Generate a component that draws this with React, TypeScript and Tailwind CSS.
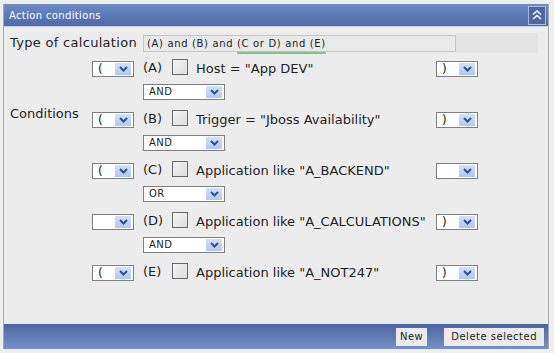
import React from 'react';

const font = { fontFamily: '"DejaVu Sans", Verdana, sans-serif' };

const Chevron: React.FC = () => (
  <svg width="9" height="6" viewBox="0 0 9 6" fill="none">
    <path d="M1 1 L4.5 4.5 L8 1" stroke="#2f4f8f" strokeWidth="2" />
  </svg>
);

const Select: React.FC<{ value: string; wide?: boolean }> = ({ value, wide }) => (
  <div
    className={`flex items-center h-[16px] bg-white border border-[#7f7f7f] ${wide ? 'w-[82px]' : 'w-[42px]'}`}
  >
    <span className={`flex-1 pl-[5px] leading-none text-[#222] ${wide ? 'text-[10px] tracking-[0.5px]' : 'text-[12px]'}`}>{value}</span>
    <span className="flex items-center justify-center w-[16px] h-[12px] mr-[2px] bg-gradient-to-b from-[#d3e0f9] to-[#b3c7ef]">
      <Chevron />
    </span>
  </div>
);

const Checkbox: React.FC = () => (
  <div className="w-[16px] h-[16px] border border-[#6b6b6b] bg-gradient-to-br from-[#f4f4f4] to-[#dcdcdc]" />
);

type Cond = { open: string; tag: string; text: string; close: string; op?: string };

const conditions: Cond[] = [
  { open: '(', tag: '(A)', text: 'Host = "App DEV"', close: ')', op: 'AND' },
  { open: '(', tag: '(B)', text: 'Trigger = "Jboss Availability"', close: ')', op: 'AND' },
  { open: '(', tag: '(C)', text: 'Application like "A_BACKEND"', close: '', op: 'OR' },
  { open: '', tag: '(D)', text: 'Application like "A_CALCULATIONS"', close: ')', op: 'AND' },
  { open: '(', tag: '(E)', text: 'Application like "A_NOT247"', close: ')' },
];

const App: React.FC = () => {
  return (
    <div className="w-[554px] h-[353px] bg-[#eeeeee] pt-[4px] overflow-hidden" style={font}>
      <div className="mx-[3px] w-[546px] border-x border-[#a9a9a9]">
        {/* Header */}
        <div className="flex items-center justify-between h-[23px] pl-[5px] pr-[2px] bg-gradient-to-b from-[#6d8cc4] to-[#4c6aa8] border-b border-[#c9d3e6]">
          <span className="text-[10px] text-white tracking-[0.35px]">Action conditions</span>
          <div className="flex items-center justify-center w-[18px] h-[19px] border border-[#a9bbe0] bg-[#4d68a4]">
            <svg width="12" height="12" viewBox="0 0 12 12" fill="none">
              <path d="M2 5.5 L6 2 L10 5.5" stroke="white" strokeWidth="1.5" />
              <path d="M2 10 L6 6.5 L10 10" stroke="white" strokeWidth="1.5" />
            </svg>
          </div>
        </div>

        {/* Body */}
        <div className="h-[292px] bg-[#ececec] text-[#1e1e1e]">
          <div className="flex items-center h-[22px] mt-[5px] pl-[6px] pr-[10px]">
            <span className="w-[133px] text-[13px] tracking-[0.3px]">Type of calculation</span>
            <div className="flex items-center w-[313px] h-[17px] bg-[#e9e9e9] border border-[#c4c4c4] pl-[3px] text-[10px] tracking-[0.65px] text-[#222] whitespace-nowrap">
              (A) and (B) and&nbsp;
              <span className="underline decoration-[#86c08c] decoration-2 underline-offset-[5px]">(C or D) and (E)</span>
            </div>
            <div className="flex-1 h-[20px] bg-[#e3e3e3]" />
          </div>

          <div className="flex mt-[3px]">
            <div className="w-[88px] pl-[6px] pt-[47px] text-[13px]">Conditions</div>
            <div className="flex flex-col">
              {conditions.map((c) => (
                <div key={c.tag} className="flex flex-col">
                  <div className="flex items-center h-[24px]">
                    <Select value={c.open} />
                    <span className="ml-[9px] w-[29px] text-[13px] -mt-[3px]">{c.tag}</span>
                    <div className="-mt-[4px]">
                      <Checkbox />
                    </div>
                    <span className="ml-[8px] w-[240px] text-[13px] whitespace-nowrap">{c.text}</span>
                    <Select value={c.close} />
                  </div>
                  {c.op && (
                    <div className="h-[27px] pt-[3px] pl-[51px]">
                      <Select value={c.op} wide />
                    </div>
                  )}
                </div>
              ))}
            </div>
          </div>
        </div>

        {/* Footer */}
        <div className="flex items-center justify-end gap-[17px] h-[25px] pr-[4px] bg-gradient-to-b from-[#4a66a3] to-[#7791c6]">
          <button className="h-[18px] px-[4px] bg-[#ebebeb] text-[10px] text-[#222] tracking-[0.5px]">New</button>
          <button className="h-[18px] px-[7px] bg-[#ebebeb] text-[10px] text-[#222] tracking-[0.5px]">Delete selected</button>
        </div>
      </div>
    </div>
  );
};

export default App;
